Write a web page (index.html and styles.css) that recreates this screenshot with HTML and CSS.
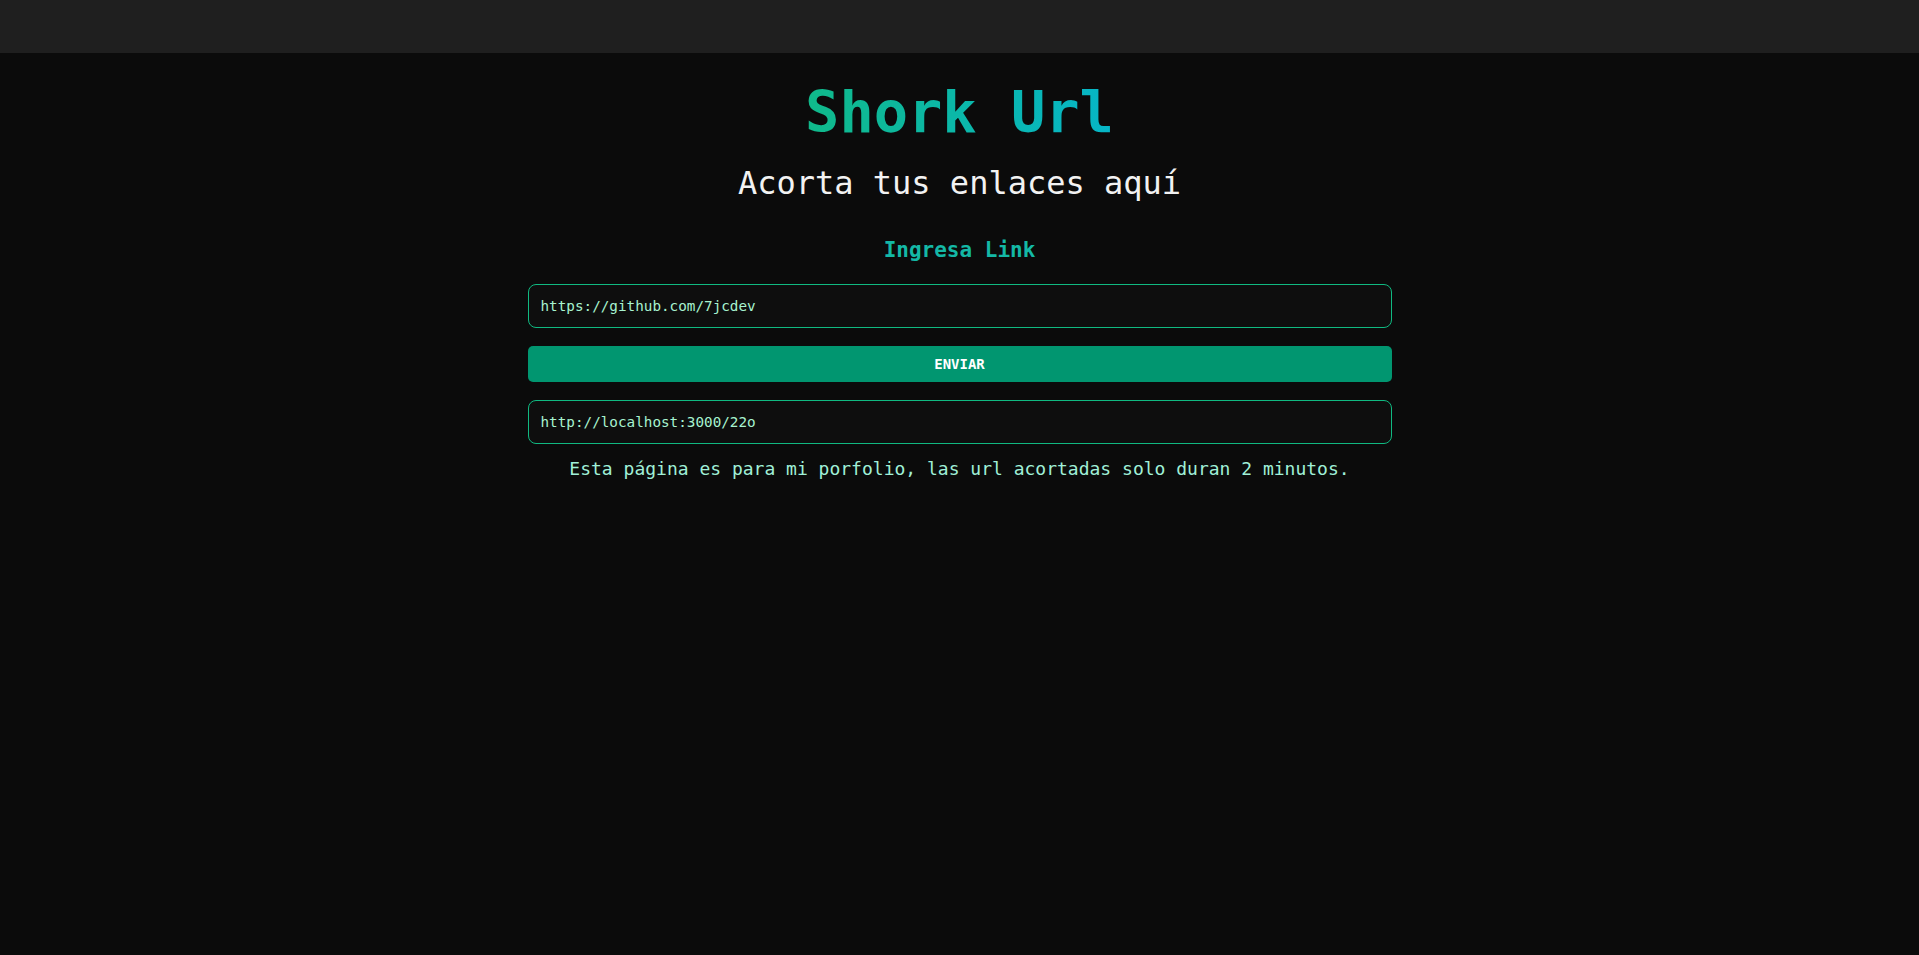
FILE: index.html
```html
<!DOCTYPE html>
<html lang="es">
<head>
<meta charset="utf-8">
<title>Shork Url</title>
<link rel="stylesheet" href="styles.css">
</head>
<body>
<header class="topbar"></header>
<main class="page">
  <h1 class="title">Shork Url</h1>
  <h2 class="subtitle">Acorta tus enlaces aquí</h2>
  <form class="form">
    <label class="label" for="link">Ingresa Link</label>
    <input class="field" id="link" type="text" value="https://github.com/7jcdev">
    <button class="btn" type="button">ENVIAR</button>
    <input class="field" type="text" value="http://localhost:3000/22o" readonly>
  </form>
  <p class="note">Esta página es para mi porfolio, las url acortadas solo duran 2 minutos.</p>
</main>
</body>
</html>
```

FILE: styles.css
```css
* { box-sizing: border-box; }
html, body { margin: 0; padding: 0; }
body {
  background: #0b0b0b;
  min-height: 100vh;
  font-family: "DejaVu Sans Mono", "Liberation Mono", monospace;
  color: #f0f0f0;
}
.topbar {
  height: 53px;
  background: #1f1f1f;
}
.page {
  width: 864px;
  margin: 0 auto;
  padding-top: 31px;
  display: flex;
  flex-direction: column;
  align-items: stretch;
}
.title {
  margin: 0;
  font-size: 57px;
  line-height: 1;
  font-weight: 700;
  text-align: center;
  align-self: center;
  background: linear-gradient(to right, #10b98a, #06b6c8);
  -webkit-background-clip: text;
  background-clip: text;
  color: transparent;
}
.subtitle {
  margin: 26px 0 0;
  font-size: 32px;
  line-height: 1;
  font-weight: 400;
  text-align: center;
  color: #f2f2f2;
}
.form {
  margin-top: 41px;
  display: flex;
  flex-direction: column;
  gap: 18px;
}
.label {
  font-size: 21px;
  line-height: 1;
  font-weight: 700;
  text-align: center;
  color: #14b8a6;
  margin-bottom: 5px;
}
.field {
  height: 44px;
  width: 100%;
  padding: 0 12px;
  border: 1px solid #10b981;
  border-radius: 8px;
  background: #0e0e0e;
  color: #a7f3d0;
  font-family: "DejaVu Sans Mono", "Liberation Mono", monospace;
  font-size: 14.3px;
  outline: none;
}
.btn {
  height: 36px;
  width: 100%;
  border: none;
  border-radius: 5px;
  background: #019670;
  color: #ffffff;
  font-family: "DejaVu Sans Mono", "Liberation Mono", monospace;
  font-size: 14px;
  font-weight: 700;
  cursor: pointer;
}
.note {
  margin: 16px 0 0;
  font-size: 18px;
  line-height: 1;
  text-align: center;
  color: #a0f0d8;
}
```
